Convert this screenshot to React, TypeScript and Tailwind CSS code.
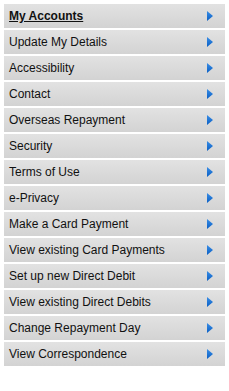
import React from "react";

const items = [
  "My Accounts",
  "Update My Details",
  "Accessibility",
  "Contact",
  "Overseas Repayment",
  "Security",
  "Terms of Use",
  "e-Privacy",
  "Make a Card Payment",
  "View existing Card Payments",
  "Set up new Direct Debit",
  "View existing Direct Debits",
  "Change Repayment Day",
  "View Correspondence",
];

function Arrow() {
  return (
    <svg width="6" height="10" viewBox="0 0 6 10" className="shrink-0">
      <defs>
        <linearGradient id="arr" x1="0" y1="0" x2="0" y2="1">
          <stop offset="0" stopColor="#3a8ee6" />
          <stop offset="1" stopColor="#0a5fc4" />
        </linearGradient>
      </defs>
      <path d="M0 0 L6 5 L0 10 Z" fill="url(#arr)" />
    </svg>
  );
}

export default function App() {
  return (
    <div className="w-[229px] h-[391px] bg-white pt-[4px] px-[4px]" style={{ fontFamily: '"Liberation Sans", Arial, sans-serif' }}>
      <ul className="flex flex-col gap-[2px] w-[221px]">
        {items.map((item, i) => (
          <li
            key={item}
            className="h-[24px] flex items-center justify-between pl-[5px] pr-[12px] bg-gradient-to-b from-[#e2e2e2] to-[#d3d3d3]"
          >
            <span className={`text-[12px] leading-none text-[#111] ${i === 0 ? "font-bold underline" : ""}`}>
              {item}
            </span>
            <Arrow />
          </li>
        ))}
      </ul>
    </div>
  );
}
